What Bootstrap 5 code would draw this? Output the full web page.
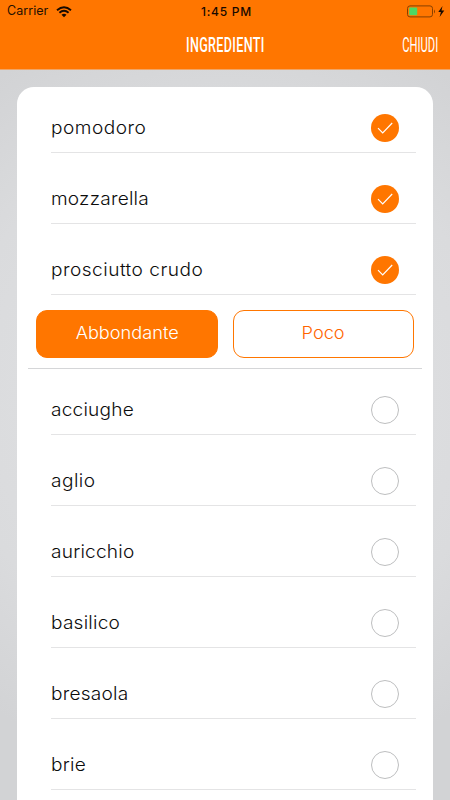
<!DOCTYPE html>
<html lang="it">
<head>
<meta charset="utf-8">
<meta name="viewport" content="width=device-width, initial-scale=1">
<title>Ingredienti</title>
<link href="https://cdn.jsdelivr.net/npm/bootstrap@5.3.0/dist/css/bootstrap.min.css" rel="stylesheet">
<style>
  :root { --brand: #ff7600; }
  body { height: 800px; color: #0c0c0c; font-family: Inter, "Liberation Sans", sans-serif;
    background: radial-gradient(circle at 225px 395px, #e2e3e5 0, #dadbdd 270px, #d2d3d5 390px); }
  .app-header { height: 70px; background: var(--brand); border-bottom: 1px solid #f0a565; }
  .status-bar { height: 23px; padding: 0 4px 0 7px; color: #241000; font-size: 12.5px; letter-spacing: .05px; }
  .status-bar .clock { font-weight: 500; font-size: 12px; letter-spacing: .75px; color: #160900; }
  .title-bar { height: 46px; padding-right: 12px; color: #fff; font-family: Roboto, sans-serif; line-height: 45px; }
  .squeeze { display: inline-block; white-space: nowrap; }
  .title-text { margin-left: 12px; font-size: 20px; font-weight: 500; letter-spacing: .5px; transform: scaleX(.63); }
  .close-text { font-size: 20px; font-weight: 400; transform: scaleX(.56); transform-origin: right center; }
  .sheet { margin: 17px 17px 0; height: 713px; border-radius: 17px 17px 0 0; }
  .ingredient { height: 71px; margin: 0 17px 0 34px; padding: 0 17px 0 0; border-bottom: 1px solid #e4e4e5; font-size: 18px; font-weight: 300; }
  .ingredient.first { height: 66px; }
  .ingredient .inner { height: 48px; }
  .ingredient .label { display: inline-block; margin-top: -2px; white-space: nowrap; letter-spacing: .2px; transform: scaleX(1.06); transform-origin: left center; }
  .ingredient .label.wide { letter-spacing: .45px; }
  .options { height: 74px; margin: 0 11px 0 11px; padding: 15px 8px 10px 8px; gap: 15px; border-bottom: 1px solid #d5d6d8; }
  .options .btn { --bs-btn-font-size: 17px; --bs-btn-font-weight: 300; --bs-btn-border-radius: 11px; --bs-btn-padding-y: 0;
    --bs-btn-border-color: var(--brand); --bs-btn-color: #ff6500; height: 48px; padding-bottom: 1px; }
  .options .btn span { display: inline-block; transform: scaleX(1.07); }
  .options .btn.chosen { --bs-btn-bg: var(--brand); --bs-btn-color: #fff; }
</style>
<script src="https://cdn.jsdelivr.net/npm/bootstrap@5.3.0/dist/js/bootstrap.bundle.min.js"></script>
</head>
<body class="overflow-hidden">
<svg class="d-none">
  <symbol id="on" viewBox="0 0 28 28"><circle cx="14" cy="14" r="14" fill="#ff7600"/><path d="M7 14.2l4.7 4.8L21.2 9" fill="none" stroke="#fff" stroke-width="1.2"/></symbol>
  <symbol id="off" viewBox="0 0 28 28"><circle cx="14" cy="14" r="13.5" fill="#fff" stroke="#bdbebf"/></symbol>
</svg>
<header class="app-header">
  <div class="status-bar row g-0 align-items-center">
    <div class="col d-flex align-items-center">
      <span class="me-1 pe-1">Carrier</span>
      <svg width="16" height="12" viewBox="0 0 16 12" fill="none" stroke="#180a00" stroke-width="1.9"><path d="M1 4.2Q8-1.8 15 4.2M3.4 6.8Q8 2.8 12.6 6.8"/><path d="M8 11.2L5.5 8.8Q8 6.8 10.5 8.8Z" fill="#180a00" stroke="none"/></svg>
    </div>
    <div class="col-auto clock">1:45 PM</div>
    <div class="col d-flex align-items-center justify-content-end">
      <svg width="39" height="13" viewBox="0 0 39 13"><rect x=".5" y=".9" width="25" height="11" rx="2.5" fill="none" stroke="#874000"/><rect x="2.2" y="2.5" width="8" height="7.8" rx="1" fill="#4cd964"/><path d="M27 4.5q2 2 0 4z" fill="#874000"/><path d="M35.5 1L31.3 6.9h2.6L32.6 12l4.7-6.6h-2.8z" fill="#180a00"/></svg>
    </div>
  </div>
  <div class="title-bar row g-0">
    <div class="col"></div>
    <div class="col-auto"><span class="squeeze title-text">INGREDIENTI</span></div>
    <div class="col text-end"><span class="squeeze close-text">CHIUDI</span></div>
  </div>
</header>
<main class="sheet bg-white">
  <div class="ingredient first d-flex align-items-end"><div class="inner w-100 d-flex align-items-center justify-content-between"><span class="label wide">pomodoro</span><svg width="28" height="28"><use href="#on"/></svg></div></div>
  <div class="ingredient d-flex align-items-end"><div class="inner w-100 d-flex align-items-center justify-content-between"><span class="label">mozzarella</span><svg width="28" height="28"><use href="#on"/></svg></div></div>
  <div class="ingredient d-flex align-items-end"><div class="inner w-100 d-flex align-items-center justify-content-between"><span class="label wide">prosciutto crudo</span><svg width="28" height="28"><use href="#on"/></svg></div></div>
  <div class="options d-flex">
    <button type="button" class="btn chosen flex-fill w-50"><span>Abbondante</span></button>
    <button type="button" class="btn flex-fill w-50"><span>Poco</span></button>
  </div>
  <div class="ingredient first d-flex align-items-end"><div class="inner w-100 d-flex align-items-center justify-content-between"><span class="label">acciughe</span><svg width="28" height="28"><use href="#off"/></svg></div></div>
  <div class="ingredient d-flex align-items-end"><div class="inner w-100 d-flex align-items-center justify-content-between"><span class="label wide">aglio</span><svg width="28" height="28"><use href="#off"/></svg></div></div>
  <div class="ingredient d-flex align-items-end"><div class="inner w-100 d-flex align-items-center justify-content-between"><span class="label">auricchio</span><svg width="28" height="28"><use href="#off"/></svg></div></div>
  <div class="ingredient d-flex align-items-end"><div class="inner w-100 d-flex align-items-center justify-content-between"><span class="label">basilico</span><svg width="28" height="28"><use href="#off"/></svg></div></div>
  <div class="ingredient d-flex align-items-end"><div class="inner w-100 d-flex align-items-center justify-content-between"><span class="label">bresaola</span><svg width="28" height="28"><use href="#off"/></svg></div></div>
  <div class="ingredient d-flex align-items-end"><div class="inner w-100 d-flex align-items-center justify-content-between"><span class="label">brie</span><svg width="28" height="28"><use href="#off"/></svg></div></div>
</main>
</body>
</html>
